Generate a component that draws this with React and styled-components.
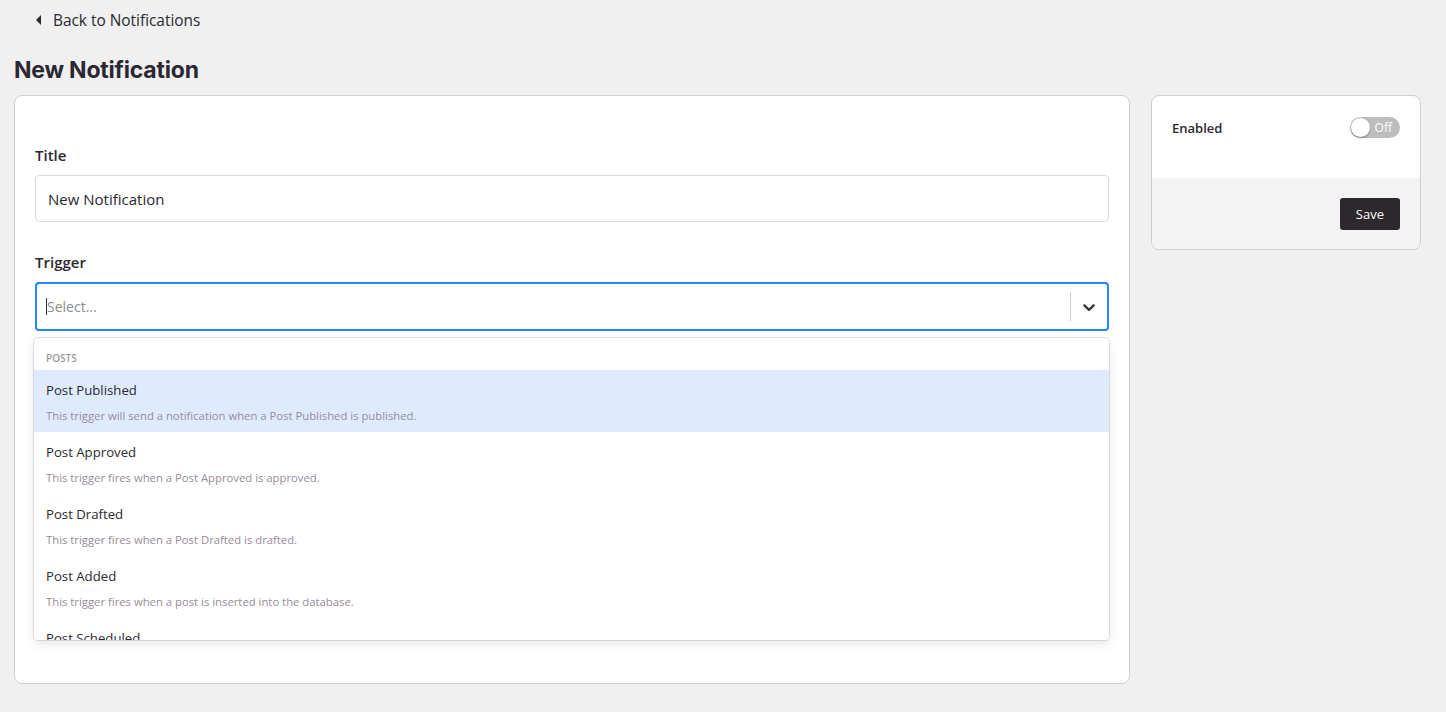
import React from "react";
import styled, { createGlobalStyle } from "styled-components";

const GlobalStyle = createGlobalStyle`
  body {
    margin: 0;
    background: #f0f0f0;
    font-family: "Open Sans", "Noto Sans", sans-serif;
    color: #2b2830;
  }
  * { box-sizing: border-box; }
`;

const Page = styled.div`
  padding: 0 25px 28px 14px;
`;

const BackLink = styled.a`
  display: flex;
  align-items: center;
  gap: 12px;
  height: 40px;
  padding-left: 22px;
  font-size: 15.4px;
  color: #2b2830;
  text-decoration: none;
  cursor: pointer;
`;

const Caret = styled.span`
  width: 0;
  height: 0;
  border-top: 5px solid transparent;
  border-bottom: 5px solid transparent;
  border-right: 5px solid #2b2830;
`;

const Heading = styled.h1`
  margin: 13px 0 8px;
  font-family: Inter, "Liberation Sans", sans-serif;
  font-weight: 700;
  font-size: 23px;
  letter-spacing: -0.2px;
  line-height: 34px;
  color: #2b2733;
`;

const Layout = styled.div`
  display: grid;
  grid-template-columns: 1fr 270px;
  gap: 21px;
  align-items: start;
`;

const Card = styled.div`
  background: #fff;
  border: 1px solid #cfcfcf;
  border-radius: 8px;
`;

const MainCard = styled(Card)`
  min-height: 589px;
  padding: 49px 20px 20px;
`;

const Field = styled.div`
  position: relative;
  margin-bottom: 30px;
`;

const Label = styled.label`
  display: block;
  font-size: 15px;
  font-weight: 600;
  line-height: 20px;
  margin-bottom: 10px;
`;

const TextInput = styled.input`
  display: block;
  width: 100%;
  height: 47px;
  padding: 0 12px;
  border: 1px solid #d9d9d9;
  border-radius: 4px;
  font: inherit;
  font-size: 15px;
  color: #2b2830;
  outline: none;
`;

const SelectControl = styled.div`
  display: flex;
  align-items: center;
  height: 49px;
  border: 2px solid #2684ff;
  border-radius: 4px;
  background: #fff;
`;

const SelectValue = styled.div`
  flex: 1;
  display: flex;
  align-items: center;
  padding-left: 9px;
  font-size: 14px;
  color: #8c8c8c;
`;

const TextCaret = styled.span`
  width: 1px;
  height: 17px;
  background: #333;
`;

const Separator = styled.span`
  align-self: stretch;
  width: 1px;
  margin: 8px 0;
  background: #ccc;
`;

const Indicator = styled.div`
  width: 36px;
  display: flex;
  justify-content: center;
  color: #333;
`;

const Menu = styled.div`
  position: absolute;
  left: -1px;
  right: 0;
  top: calc(100% + 7px);
  max-height: 302px;
  overflow: hidden;
  background: #fff;
  border-radius: 4px;
  box-shadow: 0 0 0 1px rgba(0, 0, 0, 0.1), 0 4px 11px rgba(0, 0, 0, 0.1);
  padding-top: 4px;
  z-index: 2;
`;

const GroupHeading = styled.div`
  padding: 10px 12px 6px;
  font-size: 10px;
  line-height: 12px;
  font-weight: 600;
  text-transform: uppercase;
  color: #999;
`;

const Option = styled.div`
  padding: 10px 12px 8px;
  background: ${(p) => (p.$focused ? "#deebff" : "#fff")};
`;

const OptionTitle = styled.div`
  font-size: 13.2px;
  line-height: 20px;
  color: #2b2830;
`;

const OptionDesc = styled.div`
  margin-top: 8px;
  font-size: 11.3px;
  line-height: 16px;
  color: #978b9a;
`;

const SideTop = styled.div`
  display: flex;
  justify-content: space-between;
  align-items: center;
  padding: 21px 20px 40px;
`;

const SideLabel = styled.span`
  font-size: 13px;
  font-weight: 600;
`;

const Toggle = styled.div`
  position: relative;
  width: 50px;
  height: 21px;
  border-radius: 11px;
  background: #bdbdbd;
  display: flex;
  align-items: center;
  justify-content: flex-end;
  padding-right: 8px;
  font-size: 12px;
  color: #fff;
`;

const Knob = styled.span`
  position: absolute;
  left: 1px;
  top: 1px;
  width: 19px;
  height: 19px;
  border-radius: 50%;
  background: #fff;
  box-shadow: 0 1px 2px rgba(0, 0, 0, 0.35);
`;

const SideFooter = styled.div`
  display: flex;
  justify-content: flex-end;
  padding: 20px 20px 19px;
  background: #f3f3f3;
  border-radius: 0 0 8px 8px;
`;

const SaveButton = styled.button`
  height: 32px;
  padding: 0 16px;
  border: none;
  border-radius: 3px;
  background: #2c282e;
  color: #fff;
  font: inherit;
  font-size: 13px;
  cursor: pointer;
`;

const options = [
  ["Post Published", "This trigger will send a notification when a Post Published is published."],
  ["Post Approved", "This trigger fires when a Post Approved is approved."],
  ["Post Drafted", "This trigger fires when a Post Drafted is drafted."],
  ["Post Added", "This trigger fires when a post is inserted into the database."],
  ["Post Scheduled", "This trigger fires when a Post Scheduled is scheduled."],
];

export default function App() {
  return (
    <>
      <GlobalStyle />
      <Page>
        <BackLink>
          <Caret />
          Back to Notifications
        </BackLink>
        <Heading>New Notification</Heading>
        <Layout>
          <MainCard>
            <Field>
              <Label>Title</Label>
              <TextInput defaultValue="New Notification" />
            </Field>
            <Field>
              <Label>Trigger</Label>
              <SelectControl>
                <SelectValue>
                  <TextCaret />
                  Select...
                </SelectValue>
                <Separator />
                <Indicator>
                  <svg width="20" height="20" viewBox="0 0 20 20" fill="currentColor">
                    <path d="M4.516 7.548c0.436-0.446 1.043-0.481 1.576 0l3.908 3.747 3.908-3.747c0.533-0.481 1.141-0.446 1.574 0 0.436 0.445 0.408 1.197 0 1.615-0.406 0.418-4.695 4.502-4.695 4.502-0.217 0.223-0.502 0.335-0.787 0.335s-0.57-0.112-0.789-0.335c0 0-4.287-4.084-4.695-4.502s-0.436-1.170 0-1.615z" />
                  </svg>
                </Indicator>
              </SelectControl>
              <Menu>
                <GroupHeading>Posts</GroupHeading>
                {options.map(([title, desc], i) => (
                  <Option key={title} $focused={i === 0}>
                    <OptionTitle>{title}</OptionTitle>
                    <OptionDesc>{desc}</OptionDesc>
                  </Option>
                ))}
              </Menu>
            </Field>
          </MainCard>
          <Card>
            <SideTop>
              <SideLabel>Enabled</SideLabel>
              <Toggle>
                <Knob />
                Off
              </Toggle>
            </SideTop>
            <SideFooter>
              <SaveButton>Save</SaveButton>
            </SideFooter>
          </Card>
        </Layout>
      </Page>
    </>
  );
}
